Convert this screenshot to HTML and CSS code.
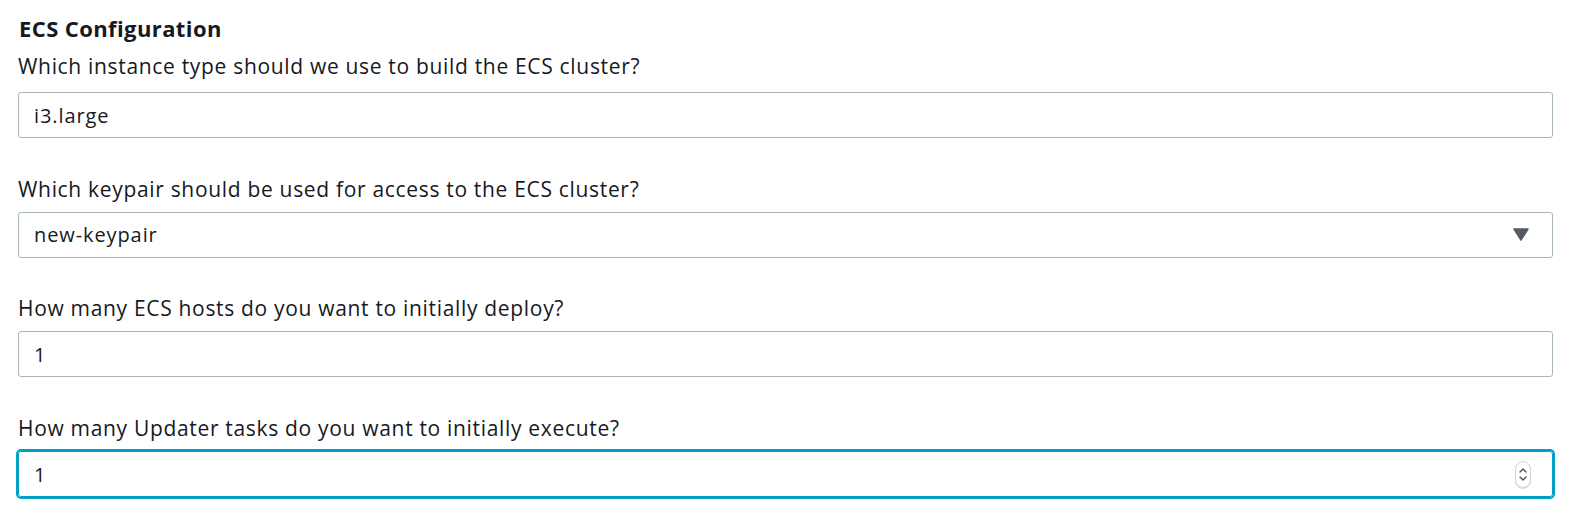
FILE: index.html
```html
<!DOCTYPE html>
<html lang="en">
<head>
<meta charset="utf-8">
<title>ECS Configuration</title>
<link rel="stylesheet" href="styles.css">
</head>
<body>
<section class="panel">
  <h2 class="panel-title">ECS Configuration</h2>
  <div class="field field-first">
    <label class="field-label">Which instance type should we use to build the ECS cluster?</label>
    <div class="control"><span class="control-value">i3.large</span></div>
  </div>
  <div class="field">
    <label class="field-label">Which keypair should be used for access to the ECS cluster?</label>
    <div class="control control-select">
      <span class="control-value">new-keypair</span>
      <svg class="caret" width="16" height="13" viewBox="0 0 16 13"><path d="M1 1H15L8 12Z" fill="#545b64" stroke="#545b64" stroke-width="1.5" stroke-linejoin="round"/></svg>
    </div>
  </div>
  <div class="field">
    <label class="field-label">How many ECS hosts do you want to initially deploy?</label>
    <div class="control"><span class="control-value">1</span></div>
  </div>
  <div class="field">
    <label class="field-label">How many Updater tasks do you want to initially execute?</label>
    <div class="control control-focus">
      <span class="control-value">1</span>
      <span class="spinner">
        <svg width="18" height="29" viewBox="0 0 18 29">
          <rect x="1.5" y="1.5" width="15" height="26" rx="7.5" fill="#fff" stroke="#d0d0d0"/>
          <path d="M6 12L9 9L12 12" fill="none" stroke="#4a4a4a" stroke-width="1.3" stroke-linecap="round" stroke-linejoin="round"/>
          <path d="M6 17L9 20L12 17" fill="none" stroke="#4a4a4a" stroke-width="1.3" stroke-linecap="round" stroke-linejoin="round"/>
        </svg>
      </span>
    </div>
  </div>
</section>
</body>
</html>
```
FILE: styles.css
```css
html, body {
  margin: 0;
  padding: 0;
  background: #ffffff;
}
body {
  font-family: "Open Sans", "Noto Sans", Arial, sans-serif;
  color: #16191f;
}
.panel {
  padding: 14px 23px 0 18px;
  display: flex;
  flex-direction: column;
}
.panel-title {
  margin: 0 0 10px 1px;
  font-size: 22px;
  line-height: 28px;
  font-weight: 700;
  letter-spacing: 0.4px;
}
.field {
  display: flex;
  flex-direction: column;
  margin-bottom: 36.7px;
}
.field-label {
  display: block;
  font-size: 21px;
  line-height: 28px;
  letter-spacing: 0.68px;
  margin: 0 0 9px 0;
}
.field-first .field-label {
  margin-bottom: 12px;
}
.control {
  position: relative;
  height: 46px;
  box-sizing: border-box;
  border: 1px solid #aab7b8;
  border-radius: 3px;
  display: flex;
  align-items: center;
  padding: 0 20px 0 15px;
  font-size: 20px;
  letter-spacing: 0.9px;
}
.control-value {
  flex: 1;
}
.control-select .caret {
  display: block;
  margin-right: 3px;
}
.control-focus {
  border-color: #00a1c9;
  box-shadow: 0 0 0 2px #00a1c9;
}
.spinner {
  display: flex;
}
.spinner svg {
  display: block;
  filter: drop-shadow(0 1px 0.5px rgba(0, 0, 0, 0.12));
}
```
